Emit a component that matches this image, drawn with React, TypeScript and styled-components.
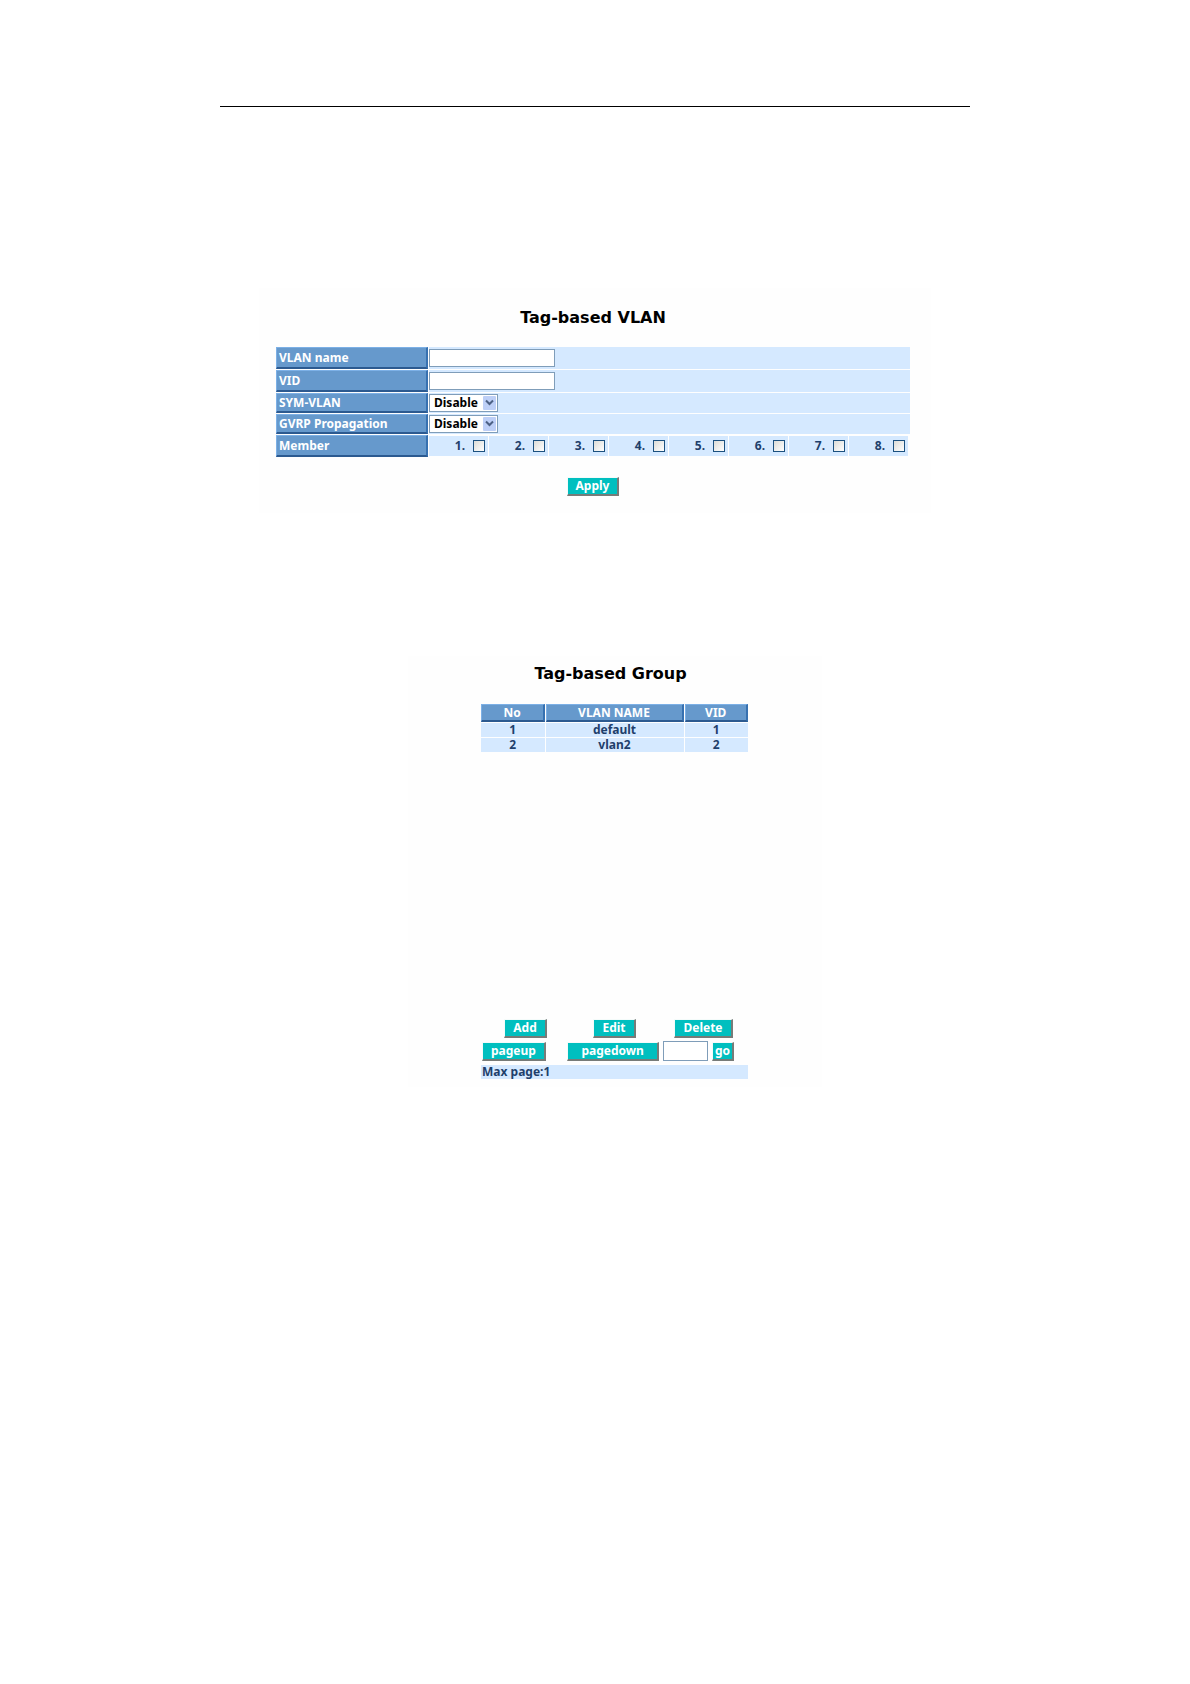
import { useState } from 'react'
import styled, { createGlobalStyle } from 'styled-components'

type Vlan = {
   no: number,
   name: string,
   vid: number,
}

type FieldProps = {
   $tall?: boolean,
}

type ButtonProps = {
   $space?: number,
}

const vlans: Vlan[] = [
   { no: 1, name: 'default', vid: 1 },
   { no: 2, name: 'vlan2', vid: 2 },
]

const ports = [1, 2, 3, 4, 5, 6, 7, 8]

const GlobalStyle = createGlobalStyle`
   * {
      box-sizing: border-box;
   }

   body {
      margin: 0;
      background: #ffffff;
      color: #1f3f6b;
      font: bold 12px/14px 'Noto Sans', 'Open Sans', sans-serif;
   }

   button, input, select {
      font: inherit;
   }
`

const Page = styled.main`
   max-width: 750px;
   margin: 0 auto;
   padding: 106px 0 40px;
`

const Rule = styled.hr`
   height: 1px;
   margin: 0;
   border: 0;
   background: #000000;
`

const FormPanel = styled.form`
   max-width: 672px;
   margin: 181px auto 0;
   padding: 20px 21px 17px 17px;
   background: #fefefe;
`

const GroupArea = styled.div`
   padding-left: 40px;
`

const GroupPanel = styled.section`
   max-width: 414px;
   margin: 143px auto 0;
   padding: 8px 74px 8px 73px;
   background: #fefefe;
`

const GroupHeader = styled.header`
   padding-right: 8px;
`

const Title = styled.h1`
   margin: 0;
   color: #000000;
   font: bold 16px/20px 'DejaVu Sans', sans-serif;
   text-align: center;
   white-space: nowrap;
`

const Fields = styled.div`
   display: flex;
   flex-direction: column;
   gap: 1px;
   margin-top: 19px;
`

const Field = styled.div<FieldProps>`
   display: grid;
   grid-template-columns: 152px 1fr;
   column-gap: 1px;
   height: ${props => props.$tall ? '22px' : '20px'};
`

const raised = `
   border: 2px solid;
   border-color: #7cb0e6 #3771b0 #2c5a90 #7cb0e6;
   border-width: 1px 2px 2px 1px;
   background: #6699cc;
   color: #ffffff;
`

const FieldName = styled.label`
   display: flex;
   align-items: center;
   padding-left: 2px;
   ${raised}
`

const FieldValue = styled.div`
   display: flex;
   align-items: center;
   background: #d5e9ff;
`

const TextInput = styled.input`
   width: 126px;
   height: 18px;
   padding: 0 3px;
   border: 1px solid #7f9db9;
   background: #ffffff;
   color: #000000;
`

const PageInput = styled(TextInput)`
   width: 45px;
   height: 20px;
`

const SelectBox = styled.div`
   display: grid;
   align-items: center;
   width: 69px;
   height: 18px;

   > * {
      grid-area: 1 / 1;
   }
`

const Select = styled.select`
   appearance: none;
   width: 100%;
   height: 18px;
   padding: 0 18px 0 4px;
   border: 1px solid #7f9db9;
   border-radius: 0;
   background: #ffffff;
   color: #000000;
   line-height: 16px;
`

const Arrow = styled.svg`
   justify-self: end;
   margin-right: 2px;
   pointer-events: none;
`

const Members = styled.div`
   display: grid;
   grid-template-columns: repeat(8, 1fr);
   gap: 1px;
   padding: 1px 2px 1px 0;
`

const Member = styled.label`
   display: flex;
   align-items: center;
   justify-content: flex-end;
   gap: 8px;
   padding-right: 3px;
   background: #d5e9ff;
`

const CheckBox = styled.input`
   appearance: none;
   width: 12px;
   height: 12px;
   margin: 0;
   border: 1px solid #1c5180;
   background: linear-gradient(135deg, #dcdcd7, #ffffff);

   &:checked {
      background: #21a121;
   }
`

const Button = styled.button<ButtonProps>`
   height: 19px;
   padding: 0 ${props => props.$space ?? 8}px;
   border: solid;
   border-color: #f4fbfa #777b78 #777b78 #f4fbfa;
   border-width: 1px 2px 2px 1px;
   background: #00bfbf;
   color: #ffffff;
   line-height: 14px;
   white-space: nowrap;
`

const Submit = styled.div`
   display: flex;
   justify-content: center;
   margin-top: 20px;
`

const ListArea = styled.div`
   min-height: 316px;
   margin-top: 20px;
`

const List = styled.table`
   width: calc(100% + 2px);
   margin: -1px;
   border-spacing: 1px;
   table-layout: fixed;
   text-align: center;
`

const HeadCell = styled.th`
   height: 18px;
   padding: 0;
   ${raised}

   &:nth-child(2) {
      width: 138px;
   }
`

const Cell = styled.td`
   height: 14px;
   padding: 0;
   background: #d5e9ff;
`

const Actions = styled.div`
   display: grid;
   grid-template-columns: repeat(3, 1fr);
   justify-items: center;
`

const Pager = styled.div`
   display: flex;
   align-items: center;
   gap: 4px;
   margin: 3px 14px 4px 1px;

   > :first-child {
      margin-right: auto;
   }
`

const MaxPage = styled.div`
   padding-left: 1px;
   background: #d5e9ff;
`

function Toggle(props: { id: string }) {
   return (
      <SelectBox>
         <Select id={props.id}>
            <option>Disable</option>
            <option>Enable</option>
         </Select>
         <Arrow width="13" height="14" viewBox="0 0 13 14">
            <rect width="13" height="14" rx="1" fill="#bdcff7" />
            <path d="M3 4.5 6.5 8 10 4.5" fill="none" stroke="#4d6185" strokeWidth="2" />
         </Arrow>
      </SelectBox>
   )
}

function VlanForm() {
   return (
      <FormPanel onSubmit={e => e.preventDefault()}>
         <Title>Tag-based VLAN</Title>
         <Fields>
            <Field $tall>
               <FieldName htmlFor="name">VLAN name</FieldName>
               <FieldValue><TextInput id="name" /></FieldValue>
            </Field>
            <Field $tall>
               <FieldName htmlFor="vid">VID</FieldName>
               <FieldValue><TextInput id="vid" /></FieldValue>
            </Field>
            <Field>
               <FieldName htmlFor="sym">SYM-VLAN</FieldName>
               <FieldValue><Toggle id="sym" /></FieldValue>
            </Field>
            <Field>
               <FieldName htmlFor="gvrp">GVRP Propagation</FieldName>
               <FieldValue><Toggle id="gvrp" /></FieldValue>
            </Field>
            <Field $tall role="group" aria-labelledby="member">
               <FieldName as="div" id="member">Member</FieldName>
               <Members>
                  {
                     ports.map(port => (
                        <Member key={port}>
                           {port}.
                           <CheckBox type="checkbox" />
                        </Member>
                     ))
                  }
               </Members>
            </Field>
         </Fields>
         <Submit>
            <Button>Apply</Button>
         </Submit>
      </FormPanel>
   )
}

function VlanGroup() {
   const [page, setPage] = useState('')

   return (
      <GroupPanel>
         <GroupHeader>
            <Title>Tag-based Group</Title>
         </GroupHeader>
         <ListArea>
            <List>
               <thead>
                  <tr>
                     <HeadCell>No</HeadCell>
                     <HeadCell>VLAN NAME</HeadCell>
                     <HeadCell>VID</HeadCell>
                  </tr>
               </thead>
               <tbody>
                  {
                     vlans.map(vlan => (
                        <tr key={vlan.no}>
                           <Cell>{vlan.no}</Cell>
                           <Cell>{vlan.name}</Cell>
                           <Cell>{vlan.vid}</Cell>
                        </tr>
                     ))
                  }
               </tbody>
            </List>
         </ListArea>
         <Actions>
            <Button>Add</Button>
            <Button>Edit</Button>
            <Button>Delete</Button>
         </Actions>
         <Pager>
            <Button>pageup</Button>
            <Button $space={13}>pagedown</Button>
            <PageInput
               aria-label="Page"
               value={page}
               onChange={e => setPage(e.target.value)}
            />
            <Button $space={2}>go</Button>
         </Pager>
         <MaxPage>Max page:1</MaxPage>
      </GroupPanel>
   )
}

export default function App() {
   return (
      <>
         <GlobalStyle />
         <Page>
            <Rule />
            <VlanForm />
            <GroupArea>
               <VlanGroup />
            </GroupArea>
         </Page>
      </>
   )
}
